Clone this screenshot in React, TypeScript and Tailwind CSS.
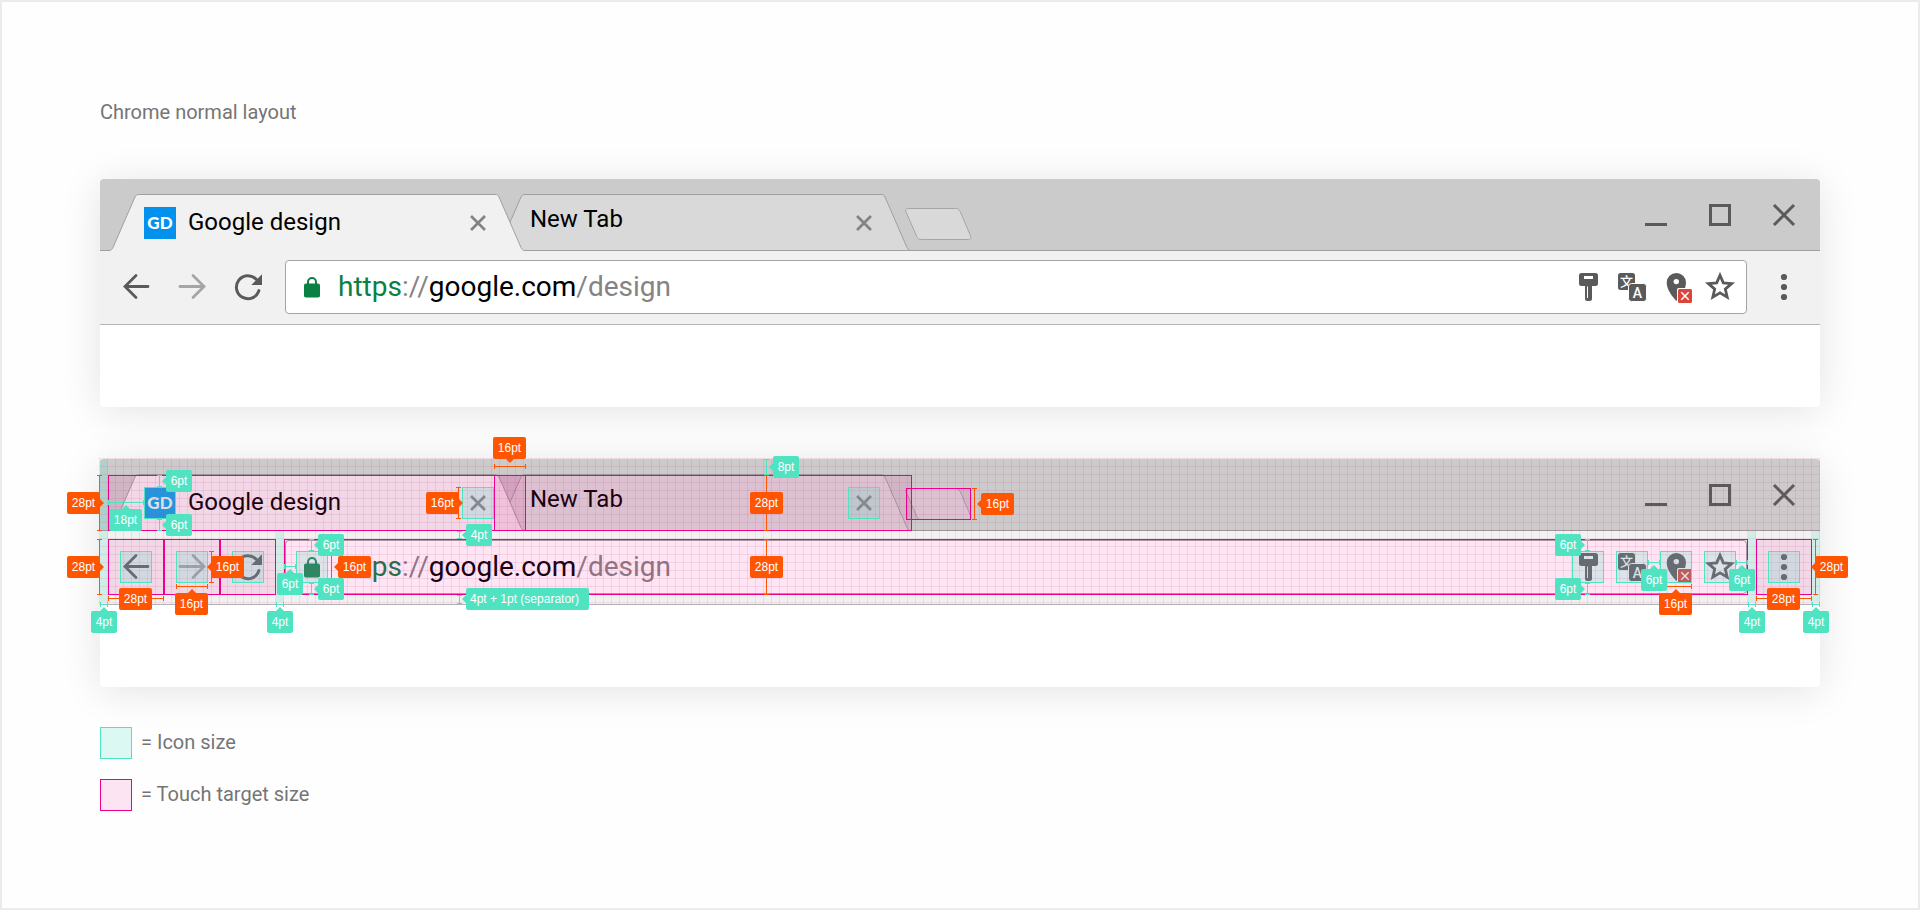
import React from 'react';

type Tone = 'orange' | 'mint';
type Arrow = 'left' | 'right' | 'up' | 'down';

// x is measured from the left edge of the window, r from the right edge
interface Box {
    x?: number;
    r?: number;
    y: number;
    w?: number;
    h?: number;
}

interface Measure {
    tone: Tone;
    text: string;
    line: Box;
    label: Box;
    arrow?: Arrow;
}

const place = (b: Box) => ({ left: b.x, right: b.r, top: b.y, width: b.w, height: b.h });

// Full touch targets
const touchTargets: Box[] = [
    { x: 8, y: 16, w: 418, h: 56 },
    { x: 394, y: 16, w: 418, h: 56 },
    { x: 806, y: 29, w: 65, h: 32 },
    { x: 8, y: 80, w: 56, h: 56 },
    { x: 64, y: 80, w: 56, h: 56 },
    { x: 120, y: 80, w: 56, h: 56 },
    { x: 184, r: 72, y: 80, h: 56 },
    { r: 8, y: 80, w: 56, h: 56 },
];

const iconBoxes: Box[] = [
    { x: 44, y: 28 },
    { x: 362, y: 28 },
    { x: 748, y: 28 },
    { x: 20, y: 92 },
    { x: 76, y: 92 },
    { x: 132, y: 92 },
    { x: 196, y: 92 },
    { r: 216, y: 92 },
    { r: 172, y: 92 },
    { r: 128, y: 92 },
    { r: 84, y: 92 },
    { r: 20, y: 92 },
];

// 4pt gutters
const gutters: Box[] = [
    { x: 0, y: 0, h: 143 },
    { x: 176, y: 72, h: 71 },
    { r: 64, y: 72, h: 71 },
    { r: 0, y: 72, h: 71 },
];

const measures: Measure[] = [
    { tone: 'orange', text: '28pt', line: { x: -1, y: 16, h: 56 }, label: { x: -33, y: 33 }, arrow: 'right' },
    { tone: 'orange', text: '28pt', line: { x: -1, y: 80, h: 56 }, label: { x: -33, y: 97 }, arrow: 'right' },
    { tone: 'orange', text: '28pt', line: { x: 8, y: 139, w: 56 }, label: { x: 19, y: 129 } },
    { tone: 'orange', text: '16pt', line: { x: 76, y: 127, w: 32 }, label: { x: 75, y: 134 }, arrow: 'up' },
    { tone: 'orange', text: '16pt', line: { x: 111, y: 92, h: 32 }, label: { x: 111, y: 97 }, arrow: 'left' },
    { tone: 'orange', text: '16pt', line: { x: 231, y: 92, h: 32 }, label: { x: 238, y: 97 }, arrow: 'left' },
    { tone: 'orange', text: '16pt', line: { x: 358, y: 28, h: 32 }, label: { x: 326, y: 33 }, arrow: 'right' },
    { tone: 'orange', text: '16pt', line: { x: 394, y: 7, w: 32 }, label: { x: 393, y: -22 }, arrow: 'down' },
    { tone: 'orange', text: '28pt', line: { x: 666, y: 16, h: 56 }, label: { x: 650, y: 33 } },
    { tone: 'orange', text: '28pt', line: { x: 666, y: 80, h: 56 }, label: { x: 650, y: 97 } },
    { tone: 'orange', text: '16pt', line: { x: 874, y: 29, h: 32 }, label: { x: 881, y: 34 }, arrow: 'left' },
    { tone: 'orange', text: '16pt', line: { r: 128, y: 127, w: 32 }, label: { r: 128, y: 134 }, arrow: 'up' },
    { tone: 'orange', text: '28pt', line: { r: 8, y: 139, w: 56 }, label: { r: 20, y: 129 } },
    { tone: 'orange', text: '28pt', line: { r: 4, y: 80, h: 56 }, label: { r: -28, y: 97 }, arrow: 'left' },
    { tone: 'mint', text: '6pt', line: { x: 59, y: 16, h: 12 }, label: { x: 66, y: 11 }, arrow: 'left' },
    { tone: 'mint', text: '6pt', line: { x: 59, y: 60, h: 12 }, label: { x: 66, y: 55 }, arrow: 'left' },
    { tone: 'mint', text: '18pt', line: { x: 8, y: 43, w: 36 }, label: { x: 9, y: 50 }, arrow: 'up' },
    { tone: 'mint', text: '4pt', line: { x: 0, y: 145, w: 8 }, label: { x: -9, y: 152 }, arrow: 'up' },
    { tone: 'mint', text: '4pt', line: { x: 176, y: 145, w: 8 }, label: { x: 167, y: 152 }, arrow: 'up' },
    { tone: 'mint', text: '6pt', line: { x: 184, y: 107, w: 12 }, label: { x: 177, y: 114 }, arrow: 'up' },
    { tone: 'mint', text: '6pt', line: { x: 211, y: 80, h: 12 }, label: { x: 218, y: 75 }, arrow: 'left' },
    { tone: 'mint', text: '6pt', line: { x: 211, y: 124, h: 12 }, label: { x: 218, y: 119 }, arrow: 'left' },
    { tone: 'mint', text: '4pt', line: { x: 359, y: 72, h: 8 }, label: { x: 366, y: 65 }, arrow: 'left' },
    { tone: 'mint', text: '4pt + 1pt (separator)', line: { x: 359, y: 136, h: 9 }, label: { x: 366, y: 129, w: 123 }, arrow: 'left' },
    { tone: 'mint', text: '8pt', line: { x: 666, y: 0, h: 16 }, label: { x: 673, y: -3 }, arrow: 'left' },
    { tone: 'mint', text: '6pt', line: { r: 232, y: 80, h: 12 }, label: { r: 239, y: 75 }, arrow: 'right' },
    { tone: 'mint', text: '6pt', line: { r: 232, y: 124, h: 12 }, label: { r: 239, y: 119 }, arrow: 'right' },
    { tone: 'mint', text: '6pt', line: { r: 160, y: 103, w: 12 }, label: { r: 153, y: 110 }, arrow: 'up' },
    { tone: 'mint', text: '6pt', line: { r: 72, y: 103, w: 12 }, label: { r: 65, y: 110 }, arrow: 'up' },
    { tone: 'mint', text: '4pt', line: { r: 64, y: 145, w: 8 }, label: { r: 55, y: 152 }, arrow: 'up' },
    { tone: 'mint', text: '4pt', line: { r: 0, y: 145, w: 8 }, label: { r: -9, y: 152 }, arrow: 'up' },
];

const arrowClass: Record<Arrow, string> = {
    left: 'right-full top-1/2 -translate-y-1/2 border-y-4 border-r-4 border-y-transparent',
    right: 'left-full top-1/2 -translate-y-1/2 border-y-4 border-l-4 border-y-transparent',
    up: 'bottom-full left-1/2 -translate-x-1/2 border-x-4 border-b-4 border-x-transparent',
    down: 'top-full left-1/2 -translate-x-1/2 border-x-4 border-t-4 border-x-transparent',
};

const arrowTone: Record<Tone, string> = {
    orange: 'border-[#ff5400]',
    mint: 'border-[#50e3c2]',
};

function Ruler({ tone, line }: { tone: Tone; line: Box }) {
    const color = tone === 'orange' ? 'bg-[#ff5400]' : 'bg-[#50e3c2]';
    const vertical = line.w === undefined;

    return (
        <div className={`absolute ${color} ${vertical ? 'w-px' : 'h-px'}`} style={place(line)}>
            <i className={`absolute ${color} ${vertical ? '-left-0.5 top-0 h-px w-[5px]' : '-top-0.5 left-0 h-[5px] w-px'}`} />
            <i className={`absolute ${color} ${vertical ? '-left-0.5 bottom-0 h-px w-[5px]' : '-top-0.5 right-0 h-[5px] w-px'}`} />
        </div>
    );
}

function Label({ tone, text, label, arrow }: Measure) {
    const color = tone === 'orange' ? 'bg-[#ff5400]' : 'bg-[#50e3c2]';

    return (
        <div
            className={`absolute h-[22px] whitespace-nowrap rounded-xs px-1 font-['Liberation_Sans',Arial,sans-serif] text-xs leading-[22px] text-white ${color} ${label.w ? 'text-left' : 'text-center'}`}
            style={{ ...place(label), minWidth: text.length > 3 ? 33 : 26 }}
        >
            {arrow && <i className={`absolute ${arrowTone[tone]} ${arrowClass[arrow]}`} />}
            {text}
        </div>
    );
}

function SpecOverlay() {
    return (
        <div className="pointer-events-none absolute inset-0 z-20">
            <div className="absolute -left-px -top-px right-0 h-[147px] bg-[linear-gradient(to_right,rgba(220,20,110,0.11)_1px,transparent_1px),linear-gradient(to_bottom,rgba(220,20,110,0.11)_1px,transparent_1px)] bg-[length:8px_8px]" />
            {gutters.map((b, i) => (
                <div key={i} className="absolute w-2 bg-[#50e3c2]/20" style={place(b)} />
            ))}
            {touchTargets.map((b, i) => (
                <div key={i} className="absolute border border-[#ec008c] bg-[#ec008c]/10" style={place(b)} />
            ))}
            {iconBoxes.map((b, i) => (
                <div key={i} className="absolute size-8 border border-[#50e3c2] bg-[#50e3c2]/20" style={place(b)} />
            ))}
            {measures.map((m, i) => (
                <Ruler key={i} tone={m.tone} line={m.line} />
            ))}
            {measures.map((m, i) => (
                <Label key={i} {...m} />
            ))}
        </div>
    );
}

function Icon({ children, className = '' }: { children: React.ReactNode; className?: string }) {
    return (
        <svg viewBox="0 0 32 32" className={`size-8 shrink-0 ${className}`} fill="none" aria-hidden="true">
            {children}
        </svg>
    );
}

function Tab({ title, active, icon }: { title: string; active?: boolean; icon?: boolean }) {
    return (
        <div
            role="tab"
            aria-selected={!!active}
            className={`relative flex h-14 w-[418px] shrink-0 items-center pl-9 pr-8 ${active ? 'z-10' : '-ml-8'}`}
        >
            <svg viewBox="0 0 418 57" className="absolute -top-px left-0 h-[57px] w-[418px]" aria-hidden="true">
                <path
                    d="M0 57V56.5H1C3 56.5 4 55.5 5 53.5L27 3C28 1 29 .5 31 .5H387C389 .5 390 1 391 3L413 53.5C414 55.5 415 56.5 417 56.5H418V57Z"
                    fill={active ? '#f1f1f1' : '#d9d9d9'}
                />
                {active && <path d="M3 56H415V57H3Z" fill="#f1f1f1" />}
                <path
                    d="M0 56.5H1C3 56.5 4 55.5 5 53.5L27 3C28 1 29 .5 31 .5H387C389 .5 390 1 391 3L413 53.5C414 55.5 415 56.5 417 56.5H418"
                    fill="none"
                    stroke="#a0a0a0"
                />
                {!active && <path d="M417 56.5H3" stroke="#a0a0a0" />}
            </svg>
            {icon && (
                <span className="relative mr-3 flex size-8 items-center justify-center bg-[#0391ee] font-[Lato,sans-serif] text-[17px] font-black leading-8 text-white">
                    GD
                </span>
            )}
            <span className={`relative flex-1 truncate text-2xl leading-8 text-black ${active ? 'pb-0.5' : 'pb-2'}`}>{title}</span>
            <button type="button" aria-label={`Close ${title}`} className="relative">
                <Icon>
                    <path d="M10 10L22 22M22 10L10 22" stroke="#838383" strokeWidth="2.7" strokeLinecap="square" />
                </Icon>
            </button>
        </div>
    );
}

function TabStrip() {
    return (
        <div className="flex h-[72px] items-start rounded-t bg-[#cbcbcb] px-2 pt-4 shadow-[inset_0_-1px_0_#a0a0a0]">
            <div role="tablist" className="flex">
                <Tab title="Google design" active icon />
                <Tab title="New Tab" />
            </div>
            <button type="button" aria-label="New tab" className="-ml-2 mt-3">
                <svg viewBox="0 0 68 34" className="h-[34px] w-[68px]" aria-hidden="true">
                    <path
                        d="M4 1.5H51.5C54 1.5 55.2 2.5 56.2 4.5L66.4 28.5C67.2 31 66.6 32.5 64.6 32.5H17.5C15 32.5 13.8 31.5 12.8 29.5L2 5C1.2 3 1.8 1.5 4 1.5Z"
                        fill="#d9d9d9"
                        stroke="#a6a6a6"
                    />
                </svg>
            </button>
            <div className="ml-auto mr-3 mt-1 flex gap-8">
                <button type="button" aria-label="Minimize">
                    <Icon>
                        <path d="M5 24H27V27H5Z" fill="#5a5a5a" />
                    </Icon>
                </button>
                <button type="button" aria-label="Maximize">
                    <Icon>
                        <rect x="6.5" y="6.5" width="19" height="19" stroke="#5a5a5a" strokeWidth="3" />
                    </Icon>
                </button>
                <button type="button" aria-label="Close window">
                    <Icon>
                        <path d="M6 6L26 26M26 6L6 26" stroke="#5a5a5a" strokeWidth="3" />
                    </Icon>
                </button>
            </div>
        </div>
    );
}

function ToolButton({ label, children }: { label: string; children: React.ReactNode }) {
    return (
        <button type="button" aria-label={label} className="flex size-14 shrink-0 items-center justify-center">
            <Icon>{children}</Icon>
        </button>
    );
}

function Omnibox() {
    return (
        <div className="mx-[9px] flex h-[54px] min-w-0 flex-1 items-center rounded border border-[#a5a5a5] bg-white px-2.5">
            <Icon>
                <rect x="8" y="12.6" width="16" height="14" rx="1.8" fill="#0b8043" />
                <path d="M12 13.5V11a4 4 0 0 1 8 0v2.5" stroke="#0b8043" strokeWidth="2" />
            </Icon>
            <div role="textbox" aria-label="Address" tabIndex={0} className="ml-2.5 min-w-0 flex-1 truncate text-[28px] leading-10 text-black outline-none">
                <span className="text-[#0b8043]">https</span>
                <span className="text-[#848484]">://</span>google.com<span className="text-[#848484]">/design</span>
            </div>
            <div className="flex gap-3">
                <button type="button" aria-label="Saved password">
                    <Icon>
                        <path d="M9.5 2H23.5A2.5 2.5 0 0 1 26 4.5V12.5A2.5 2.5 0 0 1 23.5 15H20V27.5A2.5 2.5 0 0 1 17.5 30H15.5A2.5 2.5 0 0 1 13 27.5V15H9.5A2.5 2.5 0 0 1 7 12.5V4.5A2.5 2.5 0 0 1 9.5 2Z" fill="#5a5a5a" />
                        <path d="M12 5H21V8H12ZM15 15.5H16V27H15Z" fill="#fff" />
                    </Icon>
                </button>
                <button type="button" aria-label="Translate this page">
                    <Icon>
                        <rect x="2" y="2" width="17" height="17" rx="2.5" fill="#5a5a5a" />
                        <text x="10.5" y="15" textAnchor="middle" fontSize="13" fontWeight="500" fontFamily="'Noto Sans CJK SC', sans-serif" fill="#fff">文</text>
                        <rect x="12.5" y="12.5" width="18" height="18" rx="3" fill="#5a5a5a" stroke="#fff" />
                        <text x="21.5" y="26.6" textAnchor="middle" fontSize="14" fontWeight="500" fontFamily="Roboto, sans-serif" fill="#fff">A</text>
                    </Icon>
                </button>
                <button type="button" aria-label="Location blocked">
                    <Icon>
                        <path d="M16.3 2A9.6 9.6 0 0 0 6.7 11.6C6.7 18.5 12 25.5 16.3 30C20.5 25.5 26 18.5 26 11.6A9.6 9.6 0 0 0 16.3 2Z" fill="#5a5a5a" />
                        <circle cx="16.3" cy="10.6" r="2.7" fill="#fff" />
                        <rect x="17" y="17" width="16" height="16" rx="1.5" fill="#fff" />
                        <rect x="18" y="18" width="14" height="14" rx="1.5" fill="#db4437" />
                        <path d="M21.3 21.3L28.7 28.7M28.7 21.3L21.3 28.7" stroke="#fff" strokeWidth="1.5" />
                    </Icon>
                </button>
                <button type="button" aria-label="Bookmark this page">
                    <Icon>
                        <path
                            d="M16 4.3L19.3 11.9L27.6 12.6L21.3 18.1L23.2 26.2L16 21.9L8.8 26.2L10.7 18.1L4.4 12.6L12.7 11.9Z"
                            stroke="#5a5a5a"
                            strokeWidth="2.8"
                            strokeMiterlimit="10"
                        />
                    </Icon>
                </button>
            </div>
        </div>
    );
}

function Toolbar() {
    return (
        <div className="flex h-[74px] items-start border-b border-[#b3b3b3] bg-[#f1f1f1] px-2 pt-2">
            <ToolButton label="Back">
                <path d="M28 15.5H5.5M16 4.5L5 15.5L16 26.5" stroke="#5a5a5a" strokeWidth="2.8" strokeLinecap="round" />
            </ToolButton>
            <ToolButton label="Forward">
                <path d="M4 15.5H27M17 4.5L28 15.5L17 26.5" stroke="#a5a5a5" strokeWidth="2.8" strokeLinecap="round" />
            </ToolButton>
            <ToolButton label="Reload">
                <path d="M26.9 19.6A11.5 11.5 0 1 1 24.2 8.2" stroke="#5a5a5a" strokeWidth="3" strokeLinecap="round" />
                <path d="M30 3.3V14H19.3Z" fill="#5a5a5a" />
            </ToolButton>
            <div className="flex h-14 min-w-0 flex-1 items-center">
                <Omnibox />
            </div>
            <ToolButton label="Menu">
                <circle cx="16" cy="6" r="3.1" fill="#5a5a5a" />
                <circle cx="16" cy="16" r="3.1" fill="#5a5a5a" />
                <circle cx="16" cy="26" r="3.1" fill="#5a5a5a" />
            </ToolButton>
        </div>
    );
}

function BrowserWindow({ spec }: { spec?: boolean }) {
    return (
        <section className="relative rounded bg-white shadow-[0_4px_40px_rgba(0,0,0,0.11)]">
            <TabStrip />
            <Toolbar />
            <div className="h-[82px]" />
            {spec && <SpecOverlay />}
        </section>
    );
}

export default function App() {
    return (
        <main className="min-h-screen border-2 border-[#ebebeb] bg-[#fefefe] px-[98px] pt-24 font-[Roboto,sans-serif]">
            <h1 className="text-xl leading-7 text-[#757575]">Chrome normal layout</h1>

            <div className="mt-[53px] flex flex-col gap-[52px]">
                <BrowserWindow />
                <BrowserWindow spec />
            </div>

            {/* Legend */}
            <ul className="mt-10 flex flex-col gap-5 text-xl leading-[30px] text-[#757575]">
                <li className="flex items-start gap-[9px]">
                    <span className="size-8 border border-[#50e3c2] bg-[#50e3c2]/20" />
                    = Icon size
                </li>
                <li className="flex items-start gap-[9px]">
                    <span className="size-8 border border-[#ec008c] bg-[#ec008c]/10" />
                    = Touch target size
                </li>
            </ul>
        </main>
    );
}
